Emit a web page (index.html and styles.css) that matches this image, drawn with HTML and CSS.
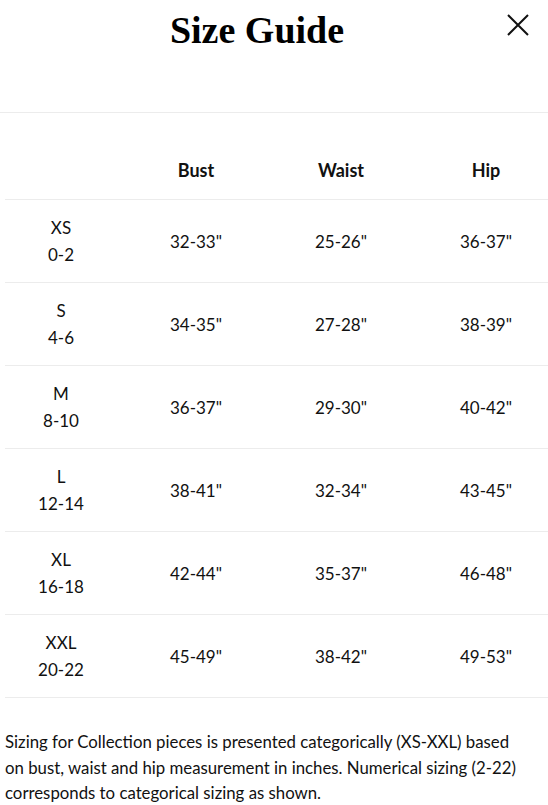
FILE: index.html
```html
<!DOCTYPE html>
<html>
<head>
<meta charset="utf-8">
<link rel="stylesheet" href="styles.css">
</head>
<body>
<div class="modal">
  <header class="head">
    <h1 class="title">Size Guide</h1>
    <button class="close" aria-label="Close">
      <svg width="24" height="24" viewBox="0 0 24 24"><path d="M2 2 L22 22 M22 2 L2 22" stroke="#111" stroke-width="2" fill="none"/></svg>
    </button>
  </header>
  <div class="table">
    <div class="row hrow">
      <div class="cell"></div>
      <div class="cell th">Bust</div>
      <div class="cell th">Waist</div>
      <div class="cell th">Hip</div>
    </div>
    <div class="row"><div class="cell size">XS<br>0-2</div><div class="cell">32-33"</div><div class="cell">25-26"</div><div class="cell">36-37"</div></div>
    <div class="row"><div class="cell size">S<br>4-6</div><div class="cell">34-35"</div><div class="cell">27-28"</div><div class="cell">38-39"</div></div>
    <div class="row"><div class="cell size">M<br>8-10</div><div class="cell">36-37"</div><div class="cell">29-30"</div><div class="cell">40-42"</div></div>
    <div class="row"><div class="cell size">L<br>12-14</div><div class="cell">38-41"</div><div class="cell">32-34"</div><div class="cell">43-45"</div></div>
    <div class="row"><div class="cell size">XL<br>16-18</div><div class="cell">42-44"</div><div class="cell">35-37"</div><div class="cell">46-48"</div></div>
    <div class="row"><div class="cell size">XXL<br>20-22</div><div class="cell">45-49"</div><div class="cell">38-42"</div><div class="cell">49-53"</div></div>
  </div>
  <p class="note">Sizing for Collection pieces is presented categorically (XS-XXL) based on bust, waist and hip measurement in inches. Numerical sizing (2-22) corresponds to categorical sizing as shown.</p>
</div>
</body>
</html>
```
FILE: styles.css
```css
html, body {
  margin: 0;
  padding: 0;
  background: #fff;
  overflow: hidden;
}
body {
  font-family: Lato, "Open Sans", sans-serif;
  color: #111;
  width: 548px;
}
.head {
  height: 112px;
  border-bottom: 1px solid #ececec;
  display: flex;
  justify-content: center;
  position: relative;
}
.title {
  margin: 9px 34px 0 0;
  font-family: "Liberation Serif", serif;
  font-weight: bold;
  font-size: 38px;
  line-height: 42px;
  color: #000;
}
.close {
  position: absolute;
  right: 18px;
  top: 13px;
  border: 0;
  background: none;
  padding: 0;
  width: 24px;
  height: 24px;
}
.close svg { display: block; }
.table {
  margin: 0 0 0 5px;
  width: 560px;
}
.row {
  display: grid;
  grid-template-columns: 112px 158px 132px 158px;
  height: 82px;
  border-bottom: 1px solid #ececec;
  align-items: center;
  text-align: center;
  font-size: 17px;
}
.hrow {
  height: 86px;
}
.th {
  font-weight: bold;
  font-size: 18px;
  padding-top: 27px;
}
.size {
  line-height: 27px;
  padding-top: 0;
}
.cell {
  color: #111;
}
.note {
  margin: 31px 0 0 5px;
  font-size: 16.8px;
  line-height: 25.5px;
  color: #111;
  width: 520px;
}
```
